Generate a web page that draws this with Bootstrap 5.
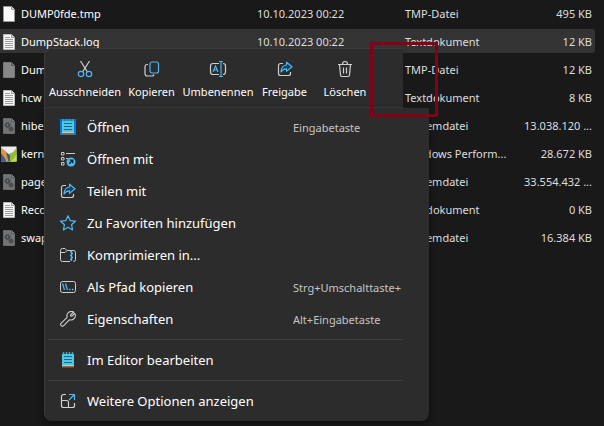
<!DOCTYPE html>
<html lang="de" data-bs-theme="dark">
<head>
<meta charset="utf-8">
<meta name="viewport" content="width=device-width, initial-scale=1">
<title>Explorer</title>
<link href="https://cdn.jsdelivr.net/npm/bootstrap@5.3.0/dist/css/bootstrap.min.css" rel="stylesheet">
<style>
body{background:#191919;color:#dedede;font-family:"Noto Sans","Open Sans",sans-serif;font-size:11px;min-height:100vh}
.files{width:calc(100% - 9px);table-layout:fixed;border-collapse:separate;border-spacing:0 4px;margin-top:-3px}
.files td{height:24px;padding:2px 0 0;line-height:20px;vertical-align:middle;white-space:nowrap}
.files .selected td{background:#333}
.files .selected td:last-child{border-radius:0 3px 3px 0}
.c-name{width:257px}.c-date{width:148px}.c-type{width:110px}
.files td.fname{color:#fff}
.files td.size{padding-right:3px}
.files svg{width:18px;height:18px;margin-right:3px;flex:none}
.ctx{left:44px;top:48px;width:385px}
.tools{width:359px;height:60px;background:#2c2c2c;border:1px solid #3b3b3b;border-right:0;border-radius:8px 0 0 0}
.tools button{color:#fff;background:none;border:0;padding:11px 0 0;line-height:16px;gap:6px}
.tools svg{width:18px;height:18px}
.w-l{width:80px}.w-m{width:53px}.w-s{width:68px}
.entries{background:#2c2c2c;border-left:1px solid #3b3b3b;border-radius:0 0 8px 8px;padding:3px 0 4px;box-shadow:0 3px 7px rgba(0,0,0,.45)}
.entries button{height:32px;width:358px;padding:0 0 0 15px;color:#fff;background:none;border:0;font-size:13px;text-align:left}
.entries svg{width:16px;height:16px;margin-right:11px;flex:none}
.entries span{padding-top:2px}
.entries .hint{width:110px;font-size:11px;color:#c5c5c5;white-space:nowrap;overflow:hidden}
.entries hr{width:355px;margin:4px 0 4px 3px;border-top:1px solid #3f3f3f;opacity:1}
.marker{left:370px;top:42px;width:68px;height:75px;border:3px solid #850016;pointer-events:none}
</style>
<script src="https://cdn.jsdelivr.net/npm/bootstrap@5.3.0/dist/js/bootstrap.bundle.min.js"></script>
</head>
<body class="position-relative overflow-hidden">
<svg class="d-none" aria-hidden="true">
 <symbol id="blank" viewBox="0 0 18 18"><path d="M3.500 1.500h8l3 3v12h-11z" fill="#fafafa" stroke="#999"/><path d="M11.500 1.500v3h3" fill="#ddd" stroke="#999"/></symbol>
 <symbol id="dim" viewBox="0 0 18 18"><path d="M3.500 1.500h8l3 3v12h-11z" fill="#878787" stroke="#777"/><path d="M11.500 1.500v3h3" fill="#777" stroke="#555"/></symbol>
 <symbol id="textfile" viewBox="0 0 18 18"><path d="M3.500 1.500h8l3 3v12h-11z" fill="#f4f4f4" stroke="#bbb"/><path d="M11.500 1.500v3h3" fill="#ddd" stroke="#999"/><path d="M5 4.500h5M5 6.500h8M5 8.500h8M5 10.500h8M5 12.500h8M5 14.500h8" stroke="#a0a0a0"/></symbol>
 <symbol id="sysfile" viewBox="0 0 18 18"><path d="M3.500 1.500h8l3 3v12h-11z" fill="#747474" stroke="#6a6a6a"/><path d="M11.500 1.500v3h3" fill="#999" stroke="#555"/><circle cx="7.500" cy="8" r="1.800" fill="none" stroke="#42474c" stroke-width="1.500"/><circle cx="7.500" cy="8" r="2.900" fill="none" stroke="#4b5055" stroke-dasharray="1.100 1.200"/><circle cx="11" cy="12" r="1.300" fill="none" stroke="#42474c" stroke-width="1.500"/><circle cx="11" cy="12" r="2.300" fill="none" stroke="#4b5055" stroke-dasharray="1 1"/></symbol>
 <symbol id="perf" viewBox="0 0 18 18"><path d="M1 1.500h15.500v15H1z" fill="#eee"/><path d="M1 5l5 4v7.500H1z" fill="#3e5997"/><path d="M1 2.500l5 4 4 10H7L1 8z" fill="#e09535"/><path d="M10 8c3 0 4-2 6.500-5v13.500H8z" fill="#94bd36"/><path d="M6 7l4 3v6.500H8.500z" fill="#3e5997"/><path d="M10 16.500c3-1 4-4 6.500-7v7z" fill="#c3d657"/></symbol>
 <symbol id="notes" viewBox="0 0 16 16"><path d="M2 2h12v11.500H2z" fill="#55c4e2"/><path d="M2 14h12v1.500H2z" fill="#b26022"/><path d="M2 13h12v1H2z" fill="#91dcec"/><path d="M3.500 0v2M6.500 0v2M9.500 0v2M12.500 0v2" stroke="#36a5c9" stroke-width="1.500"/><path d="M4 4.500h8M4 7.500h8M4 10.500h8" stroke="#0d6d93" stroke-width="1.200"/></symbol>
 <symbol id="share" viewBox="0 0 16 16"><path d="M6 2.500H3.500a2 2 0 0 0-2 2v8a2 2 0 0 0 2 2h8a2 2 0 0 0 2-2V11" fill="none" stroke="#ccc" stroke-width="1.200"/><path d="M9.500 1.200L15 5.800l-5.500 4.600V7.800C7 7.800 5.500 8.800 4 11c.2-4 2-6.700 5.500-7z" fill="#17415c" stroke="#4cb8f4" stroke-width="1.200" stroke-linejoin="round"/></symbol>
</svg>

<main>
<table class="files">
<colgroup><col class="c-name"><col class="c-date"><col class="c-type"><col></colgroup>
<tbody>
<tr><td class="fname"><div class="d-flex align-items-center"><svg><use href="#blank"/></svg>DUMP0fde.tmp</div></td><td>10.10.2023 00:22</td><td>TMP-Datei</td><td class="size text-end">495 KB</td></tr>
<tr class="selected"><td class="fname"><div class="d-flex align-items-center"><svg><use href="#textfile"/></svg>DumpStack.log</div></td><td>10.10.2023 00:22</td><td>Textdokument</td><td class="size text-end">12 KB</td></tr>
<tr><td class="fname"><div class="d-flex align-items-center"><svg><use href="#dim"/></svg>Dum</div></td><td></td><td>TMP-Datei</td><td class="size text-end">12 KB</td></tr>
<tr><td class="fname"><div class="d-flex align-items-center"><svg><use href="#textfile"/></svg>hcw</div></td><td></td><td>Textdokument</td><td class="size text-end">8 KB</td></tr>
<tr><td class="fname"><div class="d-flex align-items-center"><svg><use href="#sysfile"/></svg>hibe</div></td><td></td><td>Systemdatei</td><td class="size text-end">13.038.120 ...</td></tr>
<tr><td class="fname"><div class="d-flex align-items-center"><svg><use href="#perf"/></svg>kern</div></td><td></td><td>Windows Perform...</td><td class="size text-end">28.672 KB</td></tr>
<tr><td class="fname"><div class="d-flex align-items-center"><svg><use href="#sysfile"/></svg>page</div></td><td></td><td>Systemdatei</td><td class="size text-end">33.554.432 ...</td></tr>
<tr><td class="fname"><div class="d-flex align-items-center"><svg><use href="#textfile"/></svg>Reco</div></td><td></td><td>Textdokument</td><td class="size text-end">0 KB</td></tr>
<tr><td class="fname"><div class="d-flex align-items-center"><svg><use href="#sysfile"/></svg>swap</div></td><td></td><td>Systemdatei</td><td class="size text-end">16.384 KB</td></tr>
</tbody>
</table>
</main>

<div class="ctx position-absolute">
 <div class="tools d-flex">
  <button class="w-l d-flex flex-column align-items-center"><svg viewBox="0 0 18 18" fill="none" stroke-width="1.200"><path d="M4.500 1l6.800 10.800M13.500 1L6.700 11.800" stroke="#d0d0d0"/><circle cx="5" cy="14" r="2.700" stroke="#4cb8f4"/><circle cx="13" cy="14" r="2.700" stroke="#4cb8f4"/></svg>Ausschneiden</button>
  <button class="w-m d-flex flex-column align-items-center"><svg viewBox="0 0 18 18" fill="none" stroke-width="1.200"><path d="M5 4.500H4a2 2 0 0 0-2 2v7a2.500 2.500 0 0 0 2.500 2.500H9a2 2 0 0 0 2-1.500" stroke="#d0d0d0"/><rect x="7" y="2" width="8.500" height="11" rx="2" stroke="#4cb8f4"/></svg>Kopieren</button>
  <button class="w-l d-flex flex-column align-items-center"><svg viewBox="0 0 18 18" fill="none" stroke-width="1.200"><path d="M10 3.500H4a2.500 2.500 0 0 0-2.500 2.500v6A2.500 2.500 0 0 0 4 14.500h6M14 3.500a2.500 2.500 0 0 1 2.500 2.500v6a2.500 2.500 0 0 1-2.500 2.500" stroke="#d0d0d0"/><path d="M4 12l2.500-6L9 12M5 10h3M12 1.500v15M10 1.500h4M10 16.500h4" stroke="#4cb8f4"/></svg>Umbenennen</button>
  <button class="w-m d-flex flex-column align-items-center"><svg viewBox="-1 -1 18 18"><use href="#share" width="16" height="16"/></svg>Freigabe</button>
  <button class="w-s d-flex flex-column align-items-center"><svg viewBox="0 0 18 18" fill="none" stroke="#d0d0d0" stroke-width="1.200"><path d="M2 4.500h14M6.500 4.500V4a2.500 2.500 0 0 1 5 0v.5M3.500 4.500l1 10.500a1.500 1.500 0 0 0 1.500 1.500h6a1.500 1.500 0 0 0 1.500-1.500l1-10.500M7.500 7.500v6M10.500 7.500v6"/></svg>Löschen</button>
 </div>
 <div class="entries">
  <button class="d-flex align-items-center"><svg viewBox="0 0 16 16"><path d="M0 0h16v16H0z" fill="#0878d5"/><use href="#notes" width="16" height="16"/></svg><span class="flex-grow-1">Öffnen</span><span class="hint">Eingabetaste</span></button>
  <button class="d-flex align-items-center"><svg viewBox="0 0 16 16" fill="none"><path d="M1.500 1.500h2.500v2.500H1.500zM1.500 6.500h2.500v2.500H1.500zM1.500 11.500h2.500v2.500H1.500zM6 2.500h9M6 7.500h2" stroke="#ccc"/><circle cx="11" cy="11" r="4.500" fill="#4cb8f4"/><path d="M9.200 12.800l3.500-3.500M9.800 9.200h3v3" stroke="#10202b" stroke-width="1.300"/></svg><span>Öffnen mit</span></button>
  <button class="d-flex align-items-center"><svg><use href="#share"/></svg><span>Teilen mit</span></button>
  <button class="d-flex align-items-center"><svg viewBox="0 0 16 16"><path d="M8 .8l2.200 4.800 5.200.6-3.900 3.500 1.100 5.200L8 12.300l-4.600 2.600 1.100-5.200L.6 6.200l5.200-.6z" fill="none" stroke="#4cb8f4" stroke-width="1.200" stroke-linejoin="round"/></svg><span>Zu Favoriten hinzufügen</span></button>
  <button class="d-flex align-items-center"><svg viewBox="0 0 16 16" fill="none"><path d="M10 14.500H2.500a2 2 0 0 1-2-2v-9a2 2 0 0 1 2-2H5l2 2h6.500a2 2 0 0 1 2 2v7a2 2 0 0 1-2 2M.5 5.500H5l2-2" stroke="#d0d0d0"/><path d="M11.500 3.500V14M10 4.500h1.500M11.500 6.500H13M10 8.500h1.500M11.500 10.500H13M10 12.500h1.500" stroke="#4cb8f4" stroke-width="1.300"/></svg><span>Komprimieren in...</span></button>
  <button class="d-flex align-items-center"><svg viewBox="0 0 16 16" fill="none"><rect x=".5" y="2.500" width="15" height="11" rx="2" stroke="#d0d0d0"/><path d="M2.500 4.500l2 6.500M5.500 4.500l2 6.500M9 10.500h1.500M12 10.500h1.500" stroke="#4cb8f4" stroke-width="1.300"/></svg><span class="flex-grow-1">Als Pfad kopieren</span><span class="hint">Strg+Umschalttaste+</span></button>
  <button class="d-flex align-items-center"><svg viewBox="0 0 16 16"><path d="M13.800 1.200A4.400 4.400 0 0 0 7.200 6.400L1.200 12.200a1.700 1.700 0 0 0 2.500 2.500l5.900-6a4.400 4.400 0 0 0 5.200-6.300L12 5.200l-1.500-.3L10.800 3.500z" fill="none" stroke="#d0d0d0" stroke-width="1.100" stroke-linejoin="round"/></svg><span class="flex-grow-1">Eigenschaften</span><span class="hint">Alt+Eingabetaste</span></button>
  <hr>
  <button class="d-flex align-items-center"><svg><use href="#notes"/></svg><span>Im Editor bearbeiten</span></button>
  <hr>
  <button class="d-flex align-items-center"><svg viewBox="0 0 16 16" fill="none" stroke-width="1.200"><path d="M6 1.500H3.500a2 2 0 0 0-2 2v9a2 2 0 0 0 2 2h9a2 2 0 0 0 2-2V10M1.500 7.500h5a2 2 0 0 1 2 2v5" stroke="#d0d0d0"/><path d="M9 1.500h5.500V7M14.500 1.500L9 7" stroke="#4cb8f4"/></svg><span>Weitere Optionen anzeigen</span></button>
 </div>
</div>
<div class="marker position-absolute"></div>
</body>
</html>
